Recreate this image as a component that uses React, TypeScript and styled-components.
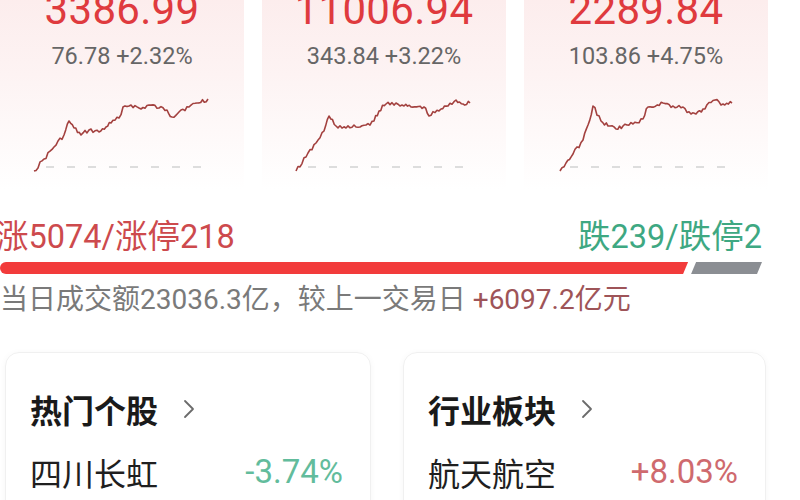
import React from 'react';
import styled, { createGlobalStyle } from 'styled-components';

const GlobalStyle = createGlobalStyle`
  html, body {
    margin: 0;
    padding: 0;
    background: #ffffff;
  }
  body {
    font-family: Roboto, "Noto Sans CJK SC", sans-serif;
    overflow: hidden;
  }
`;

const Page = styled.div`
  width: 800px;
  height: 500px;
  overflow: hidden;
  background: #ffffff;
`;

const IndexRow = styled.div`
  display: grid;
  grid-template-columns: repeat(3, 244px);
  column-gap: 18px;
  margin-top: -22px;
`;

const IndexCard = styled.div`
  height: 212px;
  display: flex;
  flex-direction: column;
  align-items: center;
  background: linear-gradient(180deg, #fcebeb 0%, #fdf3f3 45%, #ffffff 100%);
`;

const IndexValue = styled.div`
  margin-top: 11px;
  font-size: 42px;
  line-height: 1;
  color: #df3a3e;
  letter-spacing: 0.3px;
`;

const IndexChange = styled.div`
  margin-top: 12px;
  font-size: 23.5px;
  line-height: 26px;
  color: #666666;
`;

const Spark = styled.svg`
  margin-top: 28px;
  width: 176px;
  height: 78px;
  overflow: visible;
`;

const Stats = styled.div`
  padding: 0 38px 0 0;
`;

const CountRow = styled.div`
  display: flex;
  justify-content: space-between;
  align-items: center;
  font-size: 32.5px;
  line-height: 40px;
  margin-top: 27px;
`;

const CountText = styled.span<{ $tone: 'up' | 'down' }>`
  color: ${(p) => (p.$tone === 'up' ? '#cd4a4d' : '#3ea882')};
`;

const UpText = styled(CountText)`
  margin-left: -4px;
`;

const Bar = styled.div`
  display: flex;
  height: 12px;
  margin-top: 5px;
  gap: 3px;
`;

const BarPart = styled.div<{ $tone: 'up' | 'down' }>`
  height: 100%;
  background: ${(p) => (p.$tone === 'up' ? '#f23b3b' : '#8b8e93')};
  border-radius: ${(p) => (p.$tone === 'up' ? '6px 0 0 6px' : '0')};
  clip-path: ${(p) =>
    p.$tone === 'up'
      ? 'polygon(0 0, 100% 0, calc(100% - 5px) 100%, 0 100%)'
      : 'polygon(5px 0, 100% 0, calc(100% - 5px) 100%, 0 100%)'};
`;

const Turnover = styled.div`
  margin-top: 8px;
  font-size: 28px;
  line-height: 36px;
  color: #7a7a7a;
  white-space: nowrap;
`;

const Delta = styled.span`
  color: #9e5458;
`;

const CardRow = styled.div`
  display: grid;
  grid-template-columns: 366px 363px;
  column-gap: 32px;
  padding-left: 5px;
  margin-top: 34px;
`;

const ListCard = styled.div`
  height: 200px;
  border: 1px solid #f0f0f0;
  border-radius: 14px;
  box-shadow: 0 1px 6px rgba(0, 0, 0, 0.04);
  padding: 34px 27px 0 24px;
  box-sizing: border-box;
`;

const CardTitle = styled.div`
  display: flex;
  align-items: center;
  gap: 25px;
  font-family: "Noto Sans CJK SC", sans-serif;
  font-size: 32px;
  font-weight: 700;
  line-height: 44px;
  color: #1a1a1a;
`;

const ItemRow = styled.div`
  display: flex;
  justify-content: space-between;
  align-items: center;
  margin-top: 19px;
  font-size: 32px;
  line-height: 44px;
`;

const ItemName = styled.span`
  font-family: "Noto Sans CJK SC", sans-serif;
  color: #1f1f1f;
`;

const ItemValue = styled.span<{ $tone: 'up' | 'down' }>`
  font-size: 33px;
  color: ${(p) => (p.$tone === 'up' ? '#cf6a6e' : '#62bc9c')};
`;

type Pt = [number, number];

const charts: Pt[][] = [
  [[0, 74], [10, 62], [20, 50], [30, 38], [35, 24], [40, 31], [47, 38], [55, 33], [65, 35], [72, 30], [77, 26], [85, 21], [89, 10], [97, 8], [107, 12], [115, 8], [125, 11], [133, 13], [138, 20], [147, 13], [155, 10], [163, 6], [174, 2]],
  [[0, 74], [10, 60], [20, 46], [28, 34], [33, 19], [40, 29], [50, 31], [60, 30], [70, 28], [78, 24], [83, 14], [90, 7], [100, 6], [108, 9], [115, 10], [128, 10], [133, 19], [145, 12], [152, 9], [160, 3], [167, 7], [174, 6]],
  [[2, 74], [8, 66], [15, 57], [25, 43], [30, 28], [35, 9], [43, 24], [50, 29], [58, 32], [65, 29], [75, 27], [85, 22], [90, 10], [105, 6], [115, 9], [125, 10], [133, 17], [138, 17], [145, 12], [157, 3], [165, 7], [174, 6]],
];

function buildPath(points: Pt[], seed: number) {
  let s = seed;
  const rand = () => {
    s = (s * 9301 + 49297) % 233280;
    return s / 233280;
  };
  const out: string[] = [];
  points.forEach((p, i) => {
    if (i === 0) {
      out.push(`M${p[0]},${p[1]}`);
      return;
    }
    const prev = points[i - 1];
    const steps = Math.max(1, Math.round((p[0] - prev[0]) / 2));
    for (let k = 1; k <= steps; k++) {
      const t = k / steps;
      const x = prev[0] + (p[0] - prev[0]) * t;
      const jitter = k === steps ? 0 : (rand() - 0.5) * 4.5;
      const y = prev[1] + (p[1] - prev[1]) * t + jitter;
      out.push(`L${x.toFixed(1)},${y.toFixed(1)}`);
    }
  });
  return out.join(' ');
}

const indices = [
  { value: '3386.99', change: '76.78 +2.32%' },
  { value: '11006.94', change: '343.84 +3.22%' },
  { value: '2289.84', change: '103.86 +4.75%' },
];

function Chevron() {
  return (
    <svg width="12" height="20" viewBox="0 0 12 20">
      <polyline points="2,2 10,10 2,18" fill="none" stroke="#6b6b6b" strokeWidth="1.8" strokeLinecap="round" strokeLinejoin="round" />
    </svg>
  );
}

export default function App() {
  return (
    <Page>
      <GlobalStyle />
      <IndexRow>
        {indices.map((item, i) => (
          <IndexCard key={item.value}>
            <IndexValue>{item.value}</IndexValue>
            <IndexChange>{item.change}</IndexChange>
            <Spark viewBox="0 0 176 78">
              <line x1="12" y1="70" x2="172" y2="70" stroke="#d2d2d2" strokeWidth="1.3" strokeDasharray="8 13" />
              <path d={buildPath(charts[i], 17 + i * 31)} fill="none" stroke="#a3413f" strokeWidth="1.6" strokeLinejoin="round" />
            </Spark>
          </IndexCard>
        ))}
      </IndexRow>

      <Stats>
        <CountRow>
          <UpText $tone="up">涨5074/涨停218</UpText>
          <CountText $tone="down">跌239/跌停2</CountText>
        </CountRow>
        <Bar>
          <BarPart $tone="up" style={{ width: '90.3%' }} />
          <BarPart $tone="down" style={{ flex: 1 }} />
        </Bar>
        <Turnover>
          当日成交额23036.3亿，较上一交易日 <Delta>+6097.2亿元</Delta>
        </Turnover>
      </Stats>

      <CardRow>
        <ListCard>
          <CardTitle>
            热门个股 <Chevron />
          </CardTitle>
          <ItemRow>
            <ItemName>四川长虹</ItemName>
            <ItemValue $tone="down">-3.74%</ItemValue>
          </ItemRow>
        </ListCard>
        <ListCard>
          <CardTitle>
            行业板块 <Chevron />
          </CardTitle>
          <ItemRow>
            <ItemName>航天航空</ItemName>
            <ItemValue $tone="up">+8.03%</ItemValue>
          </ItemRow>
        </ListCard>
      </CardRow>
    </Page>
  );
}
